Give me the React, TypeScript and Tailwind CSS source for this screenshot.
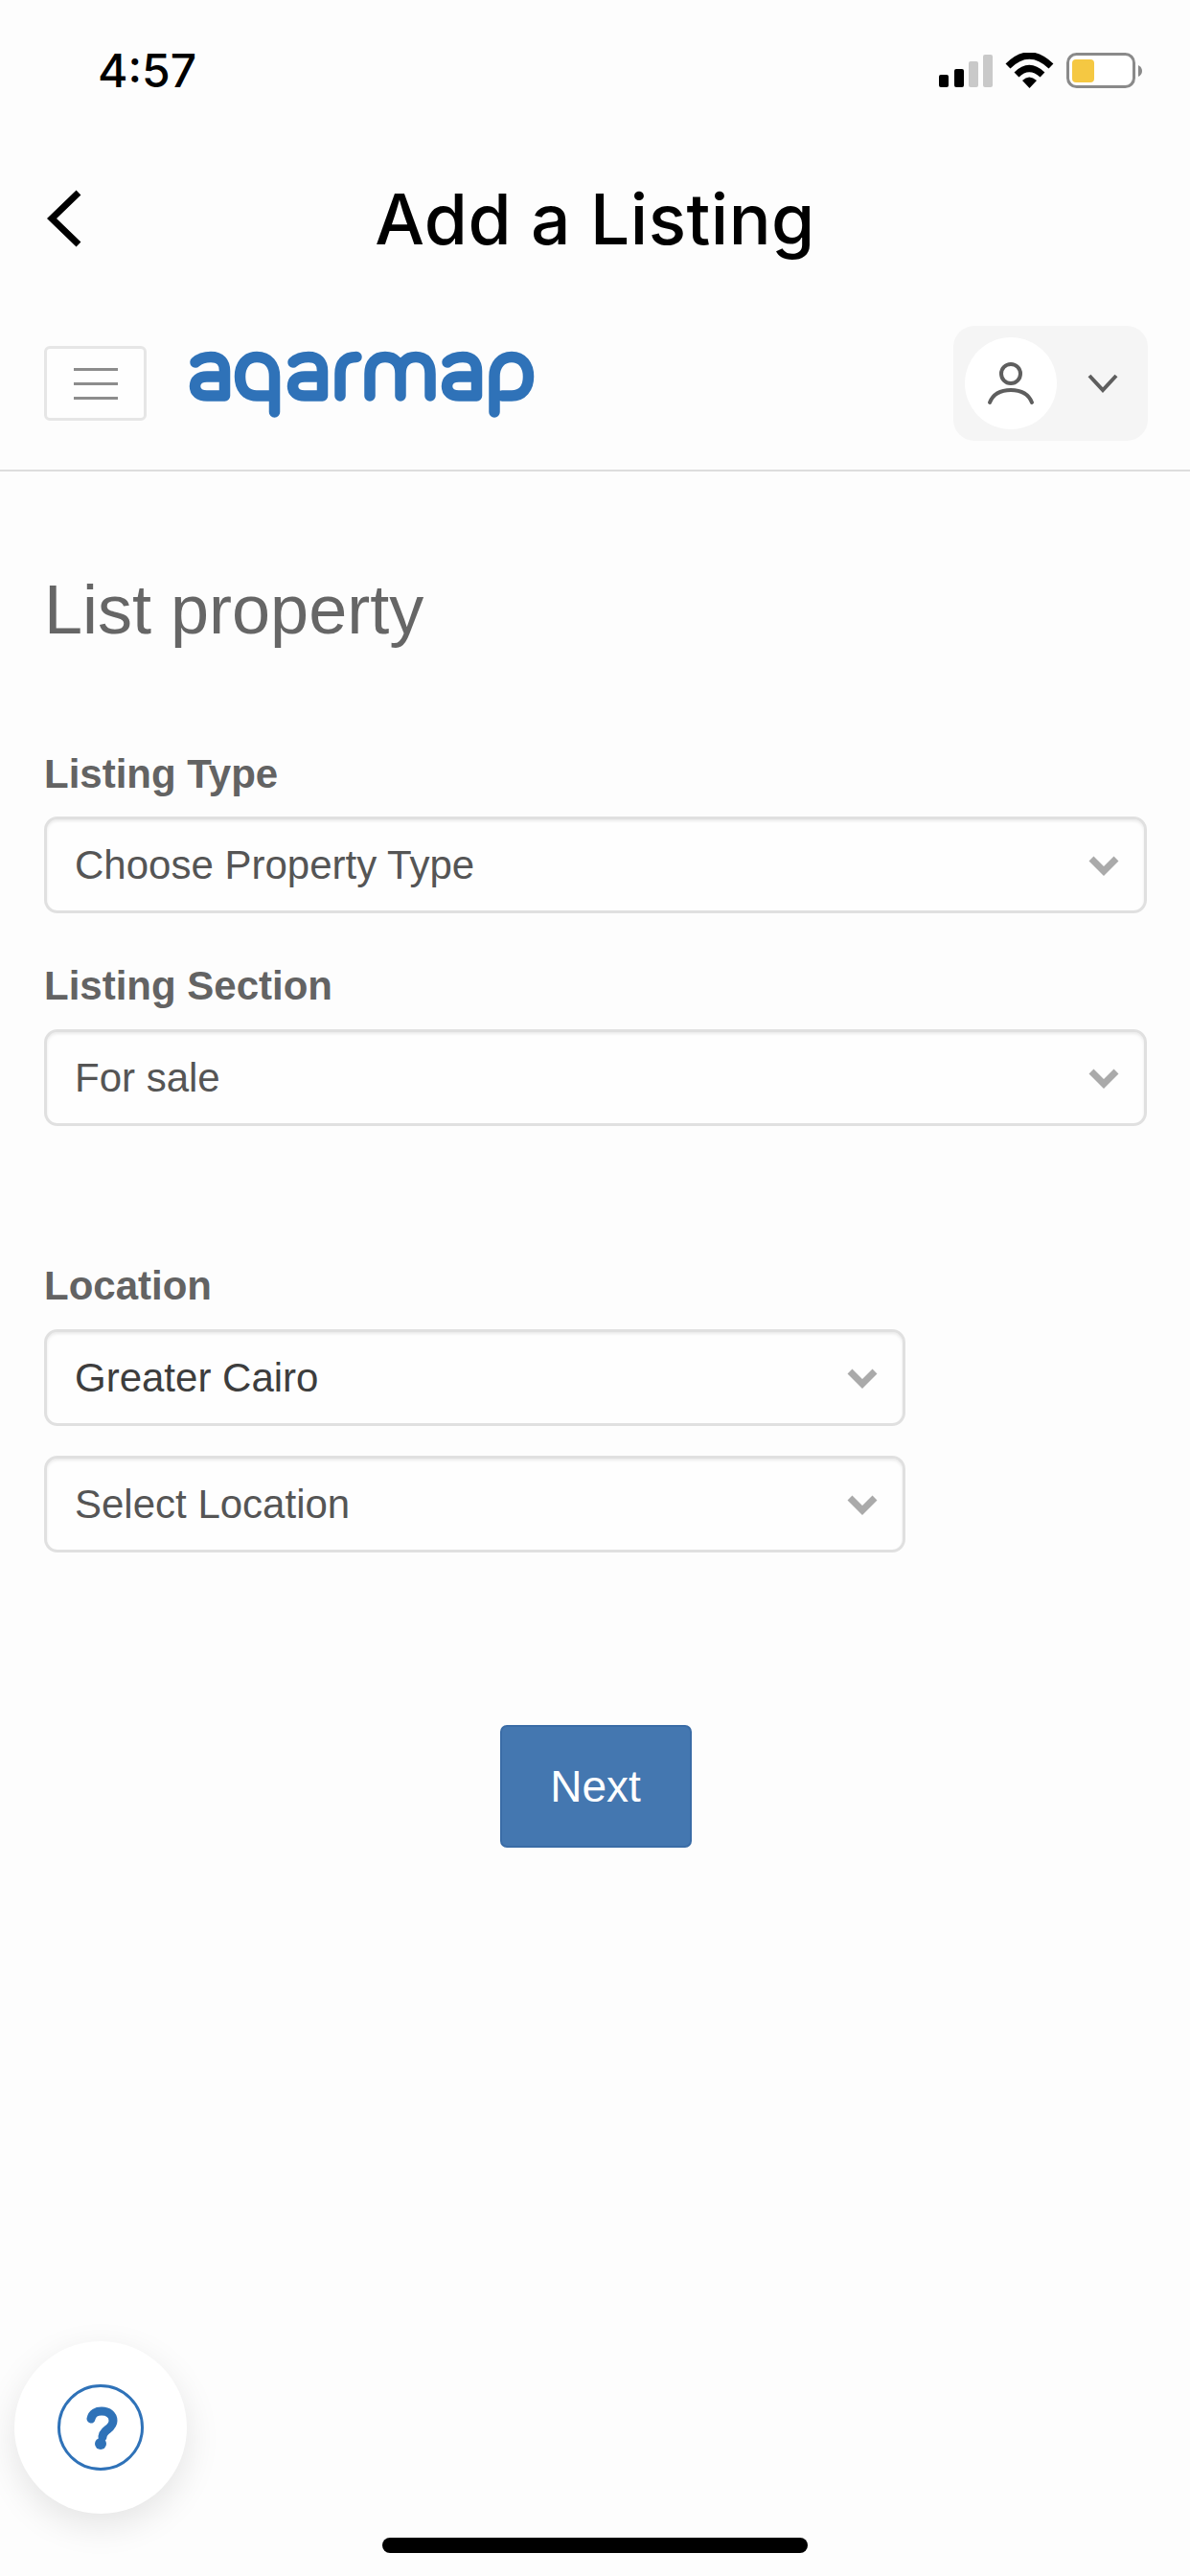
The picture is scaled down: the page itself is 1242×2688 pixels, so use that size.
const sans = "font-['Liberation_Sans',Arial,sans-serif]";

function Chevron() {
  return (
    <svg width="34" height="24" viewBox="0 0 34 24" className="shrink-0">
      <polyline points="4,5 17,18 30,5" fill="none" stroke="#aaaaaa" strokeWidth="7" />
    </svg>
  );
}

function Select({ text, dark, wide = true }: { text: string; dark?: boolean; wide?: boolean }) {
  return (
    <div
      className={`flex h-[101px] items-center justify-between rounded-[14px] border-[3px] border-[#e0e0e0] bg-[#fefefe] pl-[29px] pr-[25px] shadow-[inset_0_2px_3px_rgba(0,0,0,0.08)] ${wide ? "w-full" : "w-[899px]"}`}
    >
      <span className={`${sans} text-[42px] leading-none ${dark ? "text-[#3d3d3d]" : "text-[#555555]"}`}>{text}</span>
      <Chevron />
    </div>
  );
}

function Label({ children }: { children: string }) {
  return <div className={`${sans} text-[42px] font-bold leading-[46px] text-[#636363]`}>{children}</div>;
}

function Logo() {
  const a = "M44,38 Q50,32.5 60,32.5 C70,32.5 74.5,38 74.5,47 V73 H56 C48,73 43.5,69 43.5,63 C43.5,57 48,53 56,53 H74.5";
  return (
    <svg width="359" height="68" viewBox="38 27 359 68" fill="none" stroke="#2f72b8" strokeWidth="11.5" strokeLinecap="round" strokeLinejoin="round" className="overflow-visible" aria-label="aqarmap">
      <path d={a} />
      <path d="M126.5,73 H108 C97,73 90.5,65 90.5,53 C90.5,41 97,32.5 108,32.5 C120,32.5 126.5,41 126.5,53 V90" />
      <path d={a} transform="translate(102 0)" />
      <path d="M195,73 V50 C195,39 200,32.5 212,32.5" />
      <path d="M226,73 V50 C226,39 232,32.5 242,32.5 C252,32.5 258,39 258,50 V73 M258,50 C258,39 264,32.5 274,32.5 C284,32.5 289,39 289,50 V73" />
      <path d={a} transform="translate(263 0)" />
      <path d="M356,90 V53 C356,41 363,32.5 374,32.5 C385,32.5 391.5,41 391.5,53 C391.5,65 385,73 374,73 H364" />
    </svg>
  );
}

export default function App() {
  return (
    <div className="relative h-[2688px] w-[1242px] overflow-hidden bg-[#fdfdfd]">
      {/* status bar */}
      <div className="flex h-[160px] items-start justify-between pl-[102px] pr-[50px] pt-[49px]">
        <span className="font-['Inter',sans-serif] text-[48px] font-medium leading-[50px] text-black">4:57</span>
        <svg width="212" height="40" viewBox="979 55 212 40" className="mt-[6px]">
          <rect x="979" y="78" width="10" height="13" rx="2" fill="#000" />
          <rect x="995" y="72" width="10" height="19" rx="2" fill="#000" />
          <rect x="1010" y="64" width="10" height="27" rx="2" fill="#c9c9c9" />
          <rect x="1025" y="57" width="10" height="34" rx="2" fill="#c9c9c9" />
          <path d="M1051,69 Q1073,47 1096,69" fill="none" stroke="#000" strokeWidth="7" />
          <path d="M1060,78 Q1073,65 1087,78" fill="none" stroke="#000" strokeWidth="7" />
          <path d="M1066,84 Q1073,77 1081,84 L1073.5,92 Z" fill="#000" />
          <rect x="1113.5" y="56.5" width="69" height="34" rx="9" fill="#fff" stroke="#8a8a8a" strokeWidth="3" />
          <rect x="1118" y="62" width="23" height="24" rx="4" fill="#f5c842" />
          <path d="M1187,68 Q1191,70 1191,74 Q1191,78 1187,80 Z" fill="#8a8a8a" />
        </svg>
      </div>

      {/* nav bar */}
      <div className="grid h-[136px] grid-cols-[1fr_auto_1fr] items-center pl-[49px]">
        <svg width="36" height="60" viewBox="0 0 36 60">
          <polyline points="33,3 5,30 33,57" fill="none" stroke="#000" strokeWidth="7" />
        </svg>
        <h1 className="ml-[-49px] font-['Inter',sans-serif] text-[73px] font-medium leading-none tracking-[0.5px] text-black">Add a Listing</h1>
        <div />
      </div>

      {/* site header */}
      <header className="flex h-[196px] items-start justify-between border-b-2 border-[#dddddd] pl-[46px] pr-[44px] pt-[44px]">
        <div className="flex h-[120px] items-center gap-[45px]">
          <div className="flex h-[78px] w-[107px] flex-col items-center justify-center gap-[12px] rounded-[6px] border-[3px] border-[#e6e6e6] bg-[#fefefe]">
            <span className="h-[3px] w-[46px] bg-[#8c8c8c]" />
            <span className="h-[3px] w-[46px] bg-[#8c8c8c]" />
            <span className="h-[3px] w-[46px] bg-[#8c8c8c]" />
          </div>
          <div className="mt-[2px]">
            <Logo />
          </div>
        </div>
        <div className="flex h-[120px] w-[203px] items-center gap-[32px] rounded-[22px] bg-[#f5f5f5] pl-[12px]">
          <div className="flex h-[96px] w-[96px] items-center justify-center rounded-full bg-white">
            <svg width="56" height="56" viewBox="0 0 56 56" fill="none" stroke="#5e5e5e" strokeWidth="4">
              <circle cx="28" cy="18" r="10" />
              <path d="M6,48 C10,38 18,35 28,35 C38,35 46,38 50,48" strokeLinecap="round" />
            </svg>
          </div>
          <svg width="32" height="20" viewBox="0 0 32 20">
            <polyline points="2,2 16,17 30,2" fill="none" stroke="#5e5e5e" strokeWidth="4" />
          </svg>
        </div>
      </header>

      {/* form */}
      <main className="pl-[46px] pr-[45px] pt-[102px]">
        <h2 className={`${sans} text-[72px] font-normal leading-[84px] text-[#666666]`}>List property</h2>

        <div className="mt-[107px] flex flex-col gap-[21px]">
          <Label>Listing Type</Label>
          <Select text="Choose Property Type" />
        </div>
        <div className="mt-[53px] flex flex-col gap-[22px]">
          <Label>Listing Section</Label>
          <Select text="For sale" />
        </div>
        <div className="mt-[144px] flex flex-col gap-[22px]">
          <Label>Location</Label>
          <div className="flex flex-col gap-[31px]">
            <Select text="Greater Cairo" dark wide={false} />
            <Select text="Select Location" wide={false} />
          </div>
        </div>
        <div className="mt-[180px] flex justify-center">
          <button className={`${sans} h-[128px] w-[200px] rounded-[7px] border-2 border-[#3a6ca6] bg-[#4477b0] text-[46px] text-white`}>
            Next
          </button>
        </div>
      </main>

      {/* floating help button */}
      <div className="absolute left-[15px] top-[2443px] flex h-[180px] w-[180px] items-center justify-center rounded-full bg-white shadow-[0_12px_36px_rgba(0,0,0,0.1)]">
        <svg width="90" height="90" viewBox="-45 -45 90 90" fill="none" stroke="#2f72b8">
          <circle r="43.5" strokeWidth="3" />
          <path d="M-10,-9 C-9,-15 -4,-17 1,-17 C8,-17 13,-13 13,-7 C13,-1 8,1 5,4 C3,6 2,7 2,10" strokeWidth="9" strokeLinecap="round" />
          <circle cx="0" cy="17" r="6" fill="#2f72b8" stroke="none" />
        </svg>
      </div>

      {/* home indicator */}
      <div className="absolute left-[399px] top-[2648px] h-[16px] w-[444px] rounded-full bg-black" />
    </div>
  );
}
